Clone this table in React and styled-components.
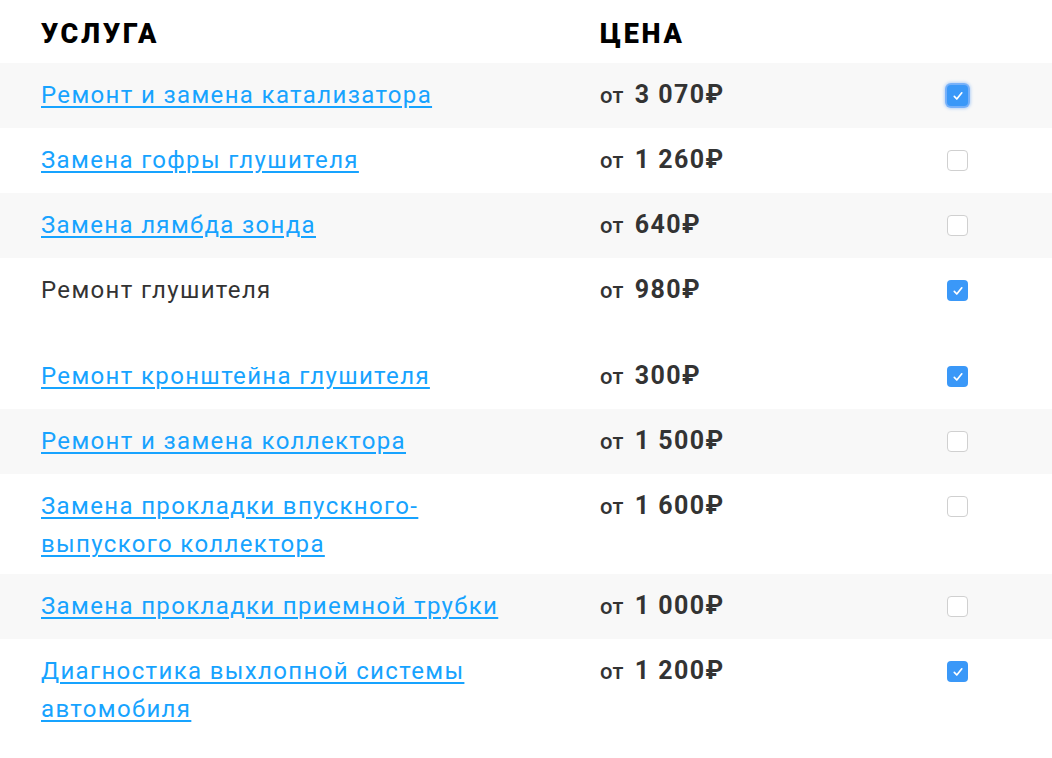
import React, { useState } from 'react'
import styled, { createGlobalStyle } from 'styled-components'

const services = [
    { name: "Ремонт и замена катализатора", price: "3 070", link: true, checked: true, focused: true, striped: true },
    { name: "Замена гофры глушителя", price: "1 260", link: true },
    { name: "Замена лямбда зонда", price: "640", link: true, striped: true },
    { name: "Ремонт глушителя", price: "980", checked: true, extra: true },
    { name: "Ремонт кронштейна глушителя", price: "300", link: true, checked: true },
    { name: "Ремонт и замена коллектора", price: "1 500", link: true, striped: true },
    { name: "Замена прокладки впускного-выпуского коллектора", price: "1 600", link: true, wrap: true },
    { name: "Замена прокладки приемной трубки", price: "1 000", link: true, striped: true },
    { name: "Диагностика выхлопной системы автомобиля", price: "1 200", link: true, checked: true, wrap: true },
]

const Checkbox = ({ checked, focused, onChange }) => (
    <Box checked={checked} focused={focused} onClick={onChange}>
        {checked && (
            <svg width="12" height="12" viewBox="0 0 12 12">
                <path d="M2.3 6.4 L4.8 9 L9.8 2.8" fill="none" stroke="#fff" strokeWidth="1.7" strokeLinecap="round" strokeLinejoin="round" />
            </svg>
        )}
    </Box>
)

const App = () => {
    const [list, setList] = useState(services)

    const toggle = idx => {
        setList(list.map((s, i) => i === idx ? { ...s, checked: !s.checked } : s))
    }

    return (
        <>
            <GlobalStyle />
            <Table>
                <Head>
                    <HeadCell>Услуга</HeadCell>
                    <HeadCell>Цена</HeadCell>
                    <div />
                </Head>
                {list.map((s, idx) => (
                    <Row key={idx} striped={s.striped} extra={s.extra} wrap={s.wrap}>
                        <Name>
                            {s.link
                                ? <Link href="#">{s.name}</Link>
                                : <span>{s.name}</span>}
                        </Name>
                        <Price>от <b>{s.price}₽</b></Price>
                        <Check>
                            <Checkbox checked={s.checked} focused={s.focused} onChange={() => toggle(idx)} />
                        </Check>
                    </Row>
                ))}
            </Table>
        </>
    )
}

const GlobalStyle = createGlobalStyle`
    body{
        margin: 0;
        background: #fff;
        font-family: Roboto, "Noto Sans", sans-serif;
    }
`

const Table = styled.div`
    width: 1052px;
`

const Grid = styled.div`
    display: grid;
    grid-template-columns: 559px 347px 1fr;
    padding-left: 41px;
`

const Head = styled(Grid)`
    padding-top: 19px;
    padding-bottom: 14px;
`

const HeadCell = styled.div`
    font-family: Roboto, sans-serif;
    font-weight: 900;
    font-size: 27px;
    line-height: 30px;
    letter-spacing: 2.8px;
    text-transform: uppercase;
    color: #000;
`

const Row = styled(Grid)`
    padding-top: 13px;
    padding-bottom: ${({ extra, wrap }) => extra ? "34px" : wrap ? "11px" : "13px"};
    background-color: ${({ striped }) => striped ? "#f8f8f8" : "#fff"};
`

const Name = styled.div`
    padding-right: 64px;
    font-size: 24px;
    line-height: 38px;
    letter-spacing: 1.35px;
    color: #333;
`

const Link = styled.a`
    color: #17a3ff;
    text-decoration: underline;
    text-underline-offset: 3px;
    text-decoration-thickness: 1.5px;
`

const Price = styled.div`
    font-size: 22px;
    font-weight: 500;
    line-height: 38px;
    letter-spacing: 0.4px;
    color: #333;
    b{
        margin-left: 5px;
        font-size: 25px;
        font-weight: 700;
        letter-spacing: 1.4px;
    }
`

const Check = styled.div`
    padding-top: 9px;
`

const Box = styled.span`
    display: flex;
    align-items: center;
    justify-content: center;
    width: 21px;
    height: 21px;
    box-sizing: border-box;
    border-radius: 4px;
    cursor: pointer;
    background-color: ${({ checked }) => checked ? "#3a98f8" : "#fff"};
    border: ${({ checked }) => checked ? "none" : "1.5px solid #d0d0d0"};
    box-shadow: ${({ focused }) => focused ? "0 0 0 2px rgba(70,150,250,0.6), 0 0 3px 3px rgba(70,150,250,0.35)" : "none"};
`

export default App
